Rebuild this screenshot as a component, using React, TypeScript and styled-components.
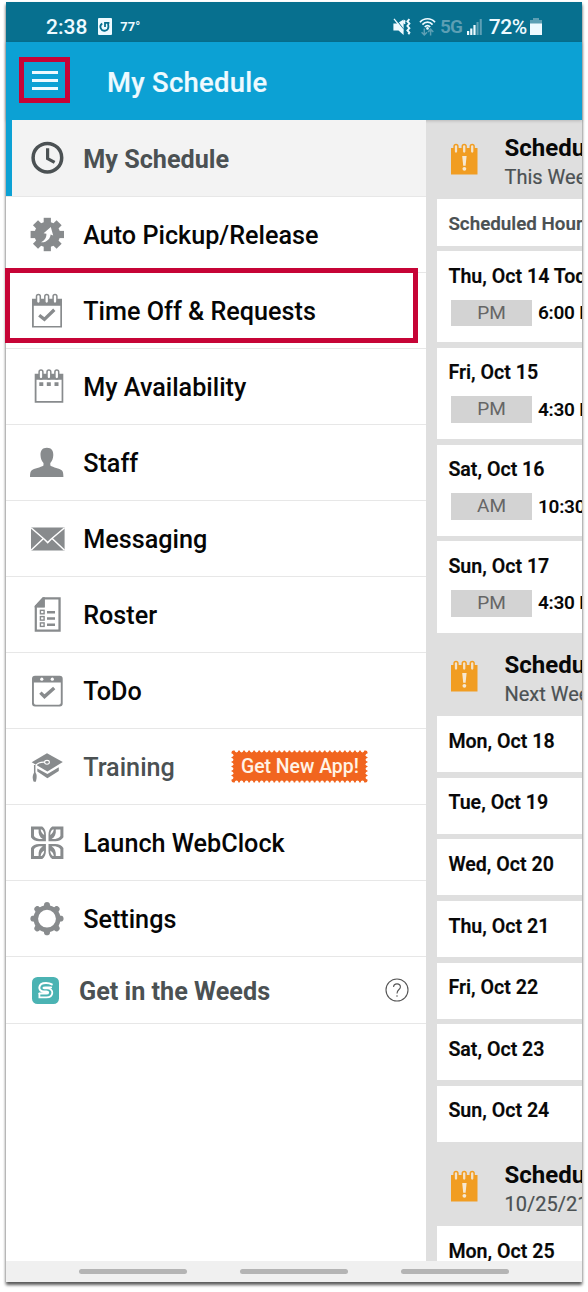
import React from "react";
import styled, { createGlobalStyle } from "styled-components";

const GlobalStyle = createGlobalStyle`
  * { box-sizing: border-box; }
  body { margin: 0; background: #fff; font-family: Roboto, "Liberation Sans", sans-serif; }
`;

const GREY = "#888b8d";

const Page = styled.div`
  width: 588px;
  height: 1292px;
  padding: 2px 6px 10px;
  background: #fff;
  overflow: hidden;
`;

const Phone = styled.div`
  width: 576px;
  height: 1280px;
  display: flex;
  flex-direction: column;
  background: #fff;
  box-shadow: 0 3px 3px rgba(0, 0, 0, 0.55), 0 2px 3px rgba(0, 0, 0, 0.25);
`;

const StatusBar = styled.div`
  height: 40px;
  flex: none;
  display: flex;
  align-items: center;
  padding: 9px 40px 0 40px;
  background: #07708f;
  color: #eefaff;
`;

const StatusText = styled.span<{ $size: number; $weight?: number; $dim?: boolean; $ml?: number; $ls?: number }>`
  font-size: ${(p) => p.$size}px;
  font-weight: ${(p) => p.$weight ?? 500};
  line-height: 24px;
  margin-left: ${(p) => p.$ml ?? 0}px;
  letter-spacing: ${(p) => p.$ls ?? 0}px;
  color: ${(p) => (p.$dim ? "#5d9fb4" : "#eefaff")};
`;

const StatusIcon = styled.svg<{ $ml?: number }>`
  flex: none;
  display: block;
  margin-left: ${(p) => p.$ml ?? 0}px;
`;

const Spacer = styled.div`
  flex: 1;
`;

const AppBar = styled.header`
  height: 78px;
  flex: none;
  display: flex;
  align-items: flex-start;
  padding: 15px 0 0 13px;
  background: #0ca1d4;
  position: relative;
  box-shadow: 0 1px 3px rgba(0, 0, 0, 0.18);
`;

const MenuButton = styled.button`
  width: 51px;
  height: 46px;
  padding: 1px 0 0;
  display: flex;
  flex-direction: column;
  align-items: center;
  justify-content: center;
  gap: 5px;
  border: 5px solid #c60436;
  background: transparent;
`;

const MenuLine = styled.span`
  width: 26px;
  height: 3px;
  background: #eefaff;
`;

const Title = styled.h1`
  margin: 10px 0 0 37px;
  font-size: 27.4px;
  letter-spacing: 0.3px;
  line-height: 32px;
  font-weight: 500;
  color: #eefaff;
  -webkit-text-stroke: 0.2px #eefaff;
`;

const Body = styled.div`
  flex: 1;
  min-height: 0;
  display: flex;
`;

const Drawer = styled.nav`
  width: 420px;
  flex: none;
  background: #fff;
`;

const Row = styled.div<{ $active?: boolean; $short?: boolean }>`
  position: relative;
  display: flex;
  align-items: center;
  height: ${(p) => (p.$short ? 68 : 76)}px;
  border-left: ${(p) => (p.$active ? "6px solid #0ca1d4" : "none")};
  padding-left: ${(p) => (p.$active ? 15 : p.$short ? 26 : 21)}px;
  border-top: ${(p) => (p.$active ? "none" : "1px solid #e7e7e7")};
  border-bottom: ${(p) => (p.$short ? "1px solid #e7e7e7" : "none")};
  background: ${(p) => (p.$active ? "#f3f3f3" : "#fff")};
`;

const RowIcon = styled.svg`
  width: 40px;
  height: 40px;
  flex: none;
`;

const Label = styled.span<{ $muted?: boolean; $bold?: boolean; $ml?: number }>`
  margin-left: ${(p) => p.$ml ?? 16.2}px;
  padding-top: ${(p) => (p.$bold ? 4 : 2)}px;
  font-size: 25.2px;
  line-height: 30px;
  font-weight: ${(p) => (p.$bold ? 700 : 500)};
  white-space: nowrap;
  color: ${(p) => (p.$muted ? "#4b5153" : "#060606")};
`;

const Highlight = styled.div`
  position: absolute;
  left: -1px;
  top: -5px;
  width: 413px;
  height: 75px;
  border: 5px solid #c60436;
  z-index: 2;
`;

const Badge = styled.span`
  position: relative;
  width: 137px;
  height: 33px;
  margin: -1px 0 0 56.5px;
  display: flex;
  align-items: center;
  justify-content: center;
  font-size: 19.4px;
  font-weight: 500;
  color: #fff3e6;
  white-space: nowrap;
`;

const BadgeShape = styled.svg`
  position: absolute;
  inset: 0;
`;

const BadgeText = styled.span`
  position: relative;
`;

const HelpIcon = styled.svg`
  margin-left: auto;
  margin-right: 17px;
`;

const Schedule = styled.main`
  flex: 1;
  min-width: 0;
  overflow: hidden;
  padding-left: 11px;
  background: #dfdfdf;
`;

const WeekHeader = styled.div<{ $h: number }>`
  height: ${(p) => p.$h}px;
  display: flex;
  align-items: flex-end;
  padding: 0 0 7px 13px;
`;

const WeekIcon = styled.svg`
  flex: none;
  margin-bottom: 17px;
`;

const WeekText = styled.div`
  margin-left: 26.5px;
  white-space: nowrap;
`;

const WeekTitle = styled.div`
  font-size: 24px;
  line-height: 28px;
  font-weight: 700;
  color: #080808;
`;

const WeekSub = styled.div`
  font-size: 20px;
  line-height: 30px;
  color: #4b5153;
  -webkit-text-stroke: 0.2px #4b5153;
`;

const Card = styled.div<{ $h: number; $last?: boolean }>`
  height: ${(p) => p.$h}px;
  margin-bottom: ${(p) => (p.$last ? 0 : 5.5)}px;
  padding: 13.7px 0 0 11.4px;
  background: #fff;
  white-space: nowrap;
`;

const CardTitle = styled.div<{ $muted?: boolean }>`
  font-size: ${(p) => (p.$muted ? 18.8 : 19.6)}px;
  line-height: 24px;
  font-weight: 600;
  margin-top: ${(p) => (p.$muted ? -0.8 : 0)}px;
  color: ${(p) => (p.$muted ? "#4b5153" : "#080808")};
  -webkit-text-stroke: 0.15px currentColor;
`;

const Shift = styled.div`
  display: flex;
  align-items: center;
  margin: 11px 0 0 2.6px;
`;

const Period = styled.span`
  flex: none;
  width: 81px;
  height: 26.5px;
  line-height: 26.5px;
  text-align: center;
  font-size: 19px;
  background: #d3d3d3;
  color: #666;
`;

const Time = styled.span`
  margin-left: 6px;
  font-size: 19px;
  letter-spacing: -0.25px;
  line-height: 26px;
  font-weight: 600;
  color: #080808;
`;

const NavBar = styled.footer`
  height: 21px;
  flex: none;
  display: flex;
  align-items: center;
  gap: 53px;
  padding-left: 73px;
  background: #f0f0f0;
`;

const Pill = styled.span`
  width: 108px;
  height: 5px;
  border-radius: 3px;
  background: #b4b4b4;
`;

const angles = [0, 45, 90, 135, 180, 225, 270, 315];

const rings = (xs: number[], top: number, stroke: string, inner: string) =>
  xs.map((x) => <rect key={x} x={x - 1.9} y={top} width="3.8" height="9" rx="1.9" fill={inner} stroke={stroke} strokeWidth="1.5" />);

const icons: Record<string, React.ReactNode> = {
  clock: (
    <g fill="none" stroke="#4b5153">
      <circle cx="20.4" cy="19.7" r="14.3" strokeWidth="3.5" />
      <path d="M20.6 10.3V20.6L27.6 24.4" strokeWidth="3.2" />
    </g>
  ),
  auto: (
    <g fill={GREY}>
      <circle cx="20.3" cy="19.5" r="12.8" />
      {angles.map((a) => (
        <rect key={a} x="16.7" y="2.8" width="7.2" height="8" transform={`rotate(${a} 20.3 19.5)`} />
      ))}
      <path d="M14 27.2C17.6 25.6 19.6 22.6 19.4 18.8L16.6 18.2L23.8 12L26.2 20.4L23.6 19.4C23.4 23.4 19.8 27.6 14 27.2Z" fill="#fff" />
    </g>
  ),
  timeoff: (
    <g>
      <path fillRule="evenodd" d="M5 7.8H35V36.6H5ZM6.8 14.8V34.9H33.3V14.8Z" fill={GREY} />
      {rings([11.4, 19.7, 28], 3.4, GREY, "#fff")}
      <path d="M12.2 24.2L17.4 28.4L27.3 18.8" fill="none" stroke={GREY} strokeWidth="3.3" />
    </g>
  ),
  availability: (
    <g fill={GREY}>
      <path fillRule="evenodd" d="M7.7 6.8H36.3V35.7H7.7ZM9.5 12.7V33.9H34.6V12.7Z" />
      {rings([14, 21.9, 29.8], 3, GREY, "#fff")}
      <path d="M12.3 15.3h4v3.7h-4zM19.8 15.3h4v3.7h-4zM27.5 15.3h4v3.7h-4z" />
    </g>
  ),
  staff: (
    <path
      fill={GREY}
      d="M19.9 4.7C24.4 4.7 26.4 7.5 26.3 12C26.2 15.6 25 18.2 23.3 20V22.4C26 24.4 32.5 25.3 35 27.4C36 28.4 36.4 30.5 36.4 34H3C3 30.5 3.4 28.4 4.5 27.4C7 25.3 13.8 24.4 16.5 22.4V20C14.8 18.2 13.6 15.6 13.5 12C13.4 7.5 15.4 4.7 19.9 4.7Z"
    />
  ),
  message: (
    <g>
      <path d="M4 8.4H37.6V31.4H4Z" fill={GREY} />
      <path d="M4 8.8L17.3 20.2L20.7 23.6L24 20.2L37.6 8.8M4 31.3L16.2 19.8M37.6 31.3L25.4 19.8" fill="none" stroke="#fff" strokeWidth="1.5" />
    </g>
  ),
  roster: (
    <g fill={GREY}>
      <path fillRule="evenodd" d="M15.8 2.2H33.7V36.7H7.7V11ZM17.6 4.4V12.2H9.9V34.5H31.4V4.4Z" />
      <path d="M15.8 2.2H17.8V12.4H7.7V11Z" />
      <path d="M20 16h8v2.4h-8zM20 22.3h8v2.4h-8zM20 28.5h8v2.4h-8z" />
      <g fill="none" stroke={GREY} strokeWidth="1.4">
        <rect x="13.4" y="15.3" width="3.7" height="3.5" />
        <rect x="13.4" y="21.6" width="3.7" height="3.5" />
        <rect x="13.4" y="27.9" width="3.7" height="3.5" />
      </g>
    </g>
  ),
  todo: (
    <g>
      <path
        fill={GREY}
        fillRule="evenodd"
        d="M8 4.8H32.7A3 3 0 0 1 35.7 7.8V32.6A3 3 0 0 1 32.7 35.6H8A3 3 0 0 1 5 32.6V7.8A3 3 0 0 1 8 4.8ZM6.9 11.6V31.8A2 2 0 0 0 8.9 33.8H31.8A2 2 0 0 0 33.8 31.8V11.6Z"
      />
      <circle cx="14.8" cy="8.2" r="1.6" fill="#fff" />
      <circle cx="25.3" cy="8.2" r="1.6" fill="#fff" />
      <path d="M13.4 21.6L17.5 25.6L27.2 17" fill="none" stroke={GREY} strokeWidth="3.4" />
    </g>
  ),
  training: (
    <g>
      <path d="M4.7 15.2L20 6.2L35.8 15L20.4 24.4Z" fill={GREY} />
      <path d="M10.3 21.4L20.4 27L31.8 20.2V24L20.4 31.2L10.3 24.6Z" fill={GREY} />
      <path d="M18 15.2C13.5 14.8 9.3 16.4 8.6 19.4" fill="none" stroke="#fff" strokeWidth="1.2" />
      <ellipse cx="20" cy="15.3" rx="2.4" ry="1.9" fill="none" stroke="#fff" strokeWidth="1.1" />
      <path d="M7.7 18V26" stroke={GREY} strokeWidth="1.5" />
      <path d="M7.7 25C10.2 26.4 10 30.6 8.8 34.8H6.8C5.2 32 5.2 27.4 7.7 25Z" fill={GREY} />
    </g>
  ),
  webclock: (
    <g fill={GREY}>
      {["1 1", "-1 1", "1 -1", "-1 -1"].map((s) => (
        <g key={s} transform={`translate(20.2 19.7) scale(${s})`}>
          <path
            fillRule="evenodd"
            d="M-16.2 -16.2H-5C-2.4 -14.4 -1.3 -11.6 -1.3 -8V-1.4H-8C-11.8 -1.6 -14.6 -2.8 -16.2 -5.4ZM-13.2 -13.2V-6.6C-12 -4.8 -10.4 -4 -8 -3.6H-4.4C-7.6 -5.6 -9 -8.6 -8.6 -13.2ZM-6.6 -13.2C-6.2 -10.6 -4.8 -8.8 -3 -7.8C-3.2 -10.6 -4 -12.2 -5.6 -13.2Z"
          />
        </g>
      ))}
    </g>
  ),
  settings: (
    <g>
      <circle cx="20" cy="19.7" r="11.2" fill="none" stroke={GREY} strokeWidth="4.6" />
      {angles.map((a) => (
        <path
          key={a}
          d="M15.8 8.6C17 7.3 17 6 17.1 5.2C17.4 2.4 22.6 2.4 22.9 5.2C23 6 23 7.3 24.2 8.6Z"
          fill={GREY}
          transform={`rotate(${a} 20 19.7)`}
        />
      ))}
    </g>
  ),
};

const notches: [number, number][] = [];
for (let i = 0; i < 26; i++) {
  const x = 3 + (i + 0.5) * (131 / 26);
  notches.push([x, 0.6], [x, 32.4]);
}
for (let i = 0; i < 6; i++) {
  const y = 3 + (i + 0.5) * 4.5;
  notches.push([0.6, y], [136.4, y]);
}

const menu = [
  { icon: "clock", label: "My Schedule", active: true },
  { icon: "auto", label: "Auto Pickup/Release" },
  { icon: "timeoff", label: "Time Off & Requests", highlight: true },
  { icon: "availability", label: "My Availability" },
  { icon: "staff", label: "Staff" },
  { icon: "message", label: "Messaging" },
  { icon: "roster", label: "Roster" },
  { icon: "todo", label: "ToDo" },
  { icon: "training", label: "Training", muted: true, badge: "Get New App!" },
  { icon: "webclock", label: "Launch WebClock" },
  { icon: "settings", label: "Settings" },
];

const shifts = [
  { day: "Thu, Oct 14 Today", period: "PM", time: "6:00 PM" },
  { day: "Fri, Oct 15", period: "PM", time: "4:30 PM" },
  { day: "Sat, Oct 16", period: "AM", time: "10:30 AM" },
  { day: "Sun, Oct 17", period: "PM", time: "4:30 PM" },
];

const nextWeek = ["Mon, Oct 18", "Tue, Oct 19", "Wed, Oct 20", "Thu, Oct 21", "Fri, Oct 22", "Sat, Oct 23", "Sun, Oct 24"];

function Week({ sub, height }: { sub: string; height: number }) {
  return (
    <WeekHeader $h={height}>
      <WeekIcon width="28" height="32" viewBox="0 0 28 32">
        <path d="M1 5H27.5V31.5H1Z" fill="#f19d22" />
        {rings([6, 14.2, 22.2], 1.4, "#f19d22", "#f3e3cb")}
        <path d="M12.2 13H16.6L15.6 22.8H13.2Z" fill="#f6e8d2" />
        <circle cx="14.4" cy="25.8" r="1.9" fill="#f6e8d2" />
      </WeekIcon>
      <WeekText>
        <WeekTitle>Schedule</WeekTitle>
        <WeekSub>{sub}</WeekSub>
      </WeekText>
    </WeekHeader>
  );
}

export default function App() {
  return (
    <Page>
      <GlobalStyle />
      <Phone>
        <StatusBar>
          <StatusText $size={21}>2:38</StatusText>
          <StatusIcon $ml={11} width="14" height="17" viewBox="0 0 14 17">
            <rect width="14" height="17" rx="1" fill="#eefaff" />
            <path d="M4.2 5.4A4 4 0 1 0 10.4 8.4L10 4.9M7 9V4.8H11.4" fill="none" stroke="#07708f" strokeWidth="1.8" />
          </StatusIcon>
          <StatusText $size={13} $weight={700} $ml={8}>77°</StatusText>
          <Spacer />
          <StatusIcon width="18" height="18" viewBox="0 0 18 18">
            <path d="M0.4 5.6H4L10.6 1.4V17L5.5 12.4H0.4Z" fill="#eefaff" />
            <path d="M2 0L12 13.5" stroke="#07708f" strokeWidth="1.2" />
            <path d="M1 0.8L10.5 12.5" stroke="#eefaff" strokeWidth="1.3" />
            <path d="M12 2.4l-1.2 1.8 1.2 1.6M16.4 1.2l-2 2.2 2 2.2-2 2.3 2 2.3-2 2.3 2 2.2-1 1.6" fill="none" stroke="#eefaff" strokeWidth="1.9" />
          </StatusIcon>
          <StatusIcon $ml={7.5} width="17" height="20" viewBox="0 0 17 20">
            <g fill="none" stroke="#eefaff" strokeWidth="1.7">
              <path d="M1 5.2C5 .6 12 .6 16 5.2M3.4 7.6C6.2 4.4 10.8 4.4 13.6 7.6M5.8 10C7.4 8.2 9.6 8.2 11.2 10" />
            </g>
            <circle cx="8.5" cy="11.4" r="1.3" fill="#eefaff" />
            <path d="M5.3 11.5v6.3M2.6 15.2l2.7 2.8 2.7-2.8M11.6 18.5v-6M9 15l2.6-2.8 2.7 2.8" fill="none" stroke="#5d9fb4" strokeWidth="1.5" />
          </StatusIcon>
          <StatusText $size={19} $weight={600} $dim $ml={4} $ls={-0.8}>5G</StatusText>
          <StatusIcon $ml={5} width="15" height="16" viewBox="0 0 15 16">
            <path d="M0 12h2.2v4H0zM3.2 9.5h2.2v6.5H3.2zM6.4 6h2.2v10H6.4z" fill="#eefaff" />
            <path d="M9.5 3h2.1v13H9.5zM12.7 0h2.1v16h-2.1z" fill="#5d9fb4" />
          </StatusIcon>
          <StatusText $size={21} $ml={6.5} $ls={-0.35}>72%</StatusText>
          <StatusIcon $ml={3} width="12" height="17" viewBox="0 0 12 17">
            <path d="M3 0h6v2h3v4H0V2h3z" fill="#5d9fb4" />
            <path d="M0 5.5h12V17H0z" fill="#eefaff" />
          </StatusIcon>
        </StatusBar>

        <AppBar>
          <MenuButton aria-label="Menu">
            <MenuLine />
            <MenuLine />
            <MenuLine />
          </MenuButton>
          <Title>My Schedule</Title>
        </AppBar>

        <Body>
          <Drawer>
            {menu.map((m) => (
              <Row key={m.label} $active={m.active}>
                <RowIcon viewBox="0 0 40 40">{icons[m.icon]}</RowIcon>
                <Label $muted={m.active || m.muted} $bold={m.active}>
                  {m.label}
                </Label>
                {m.badge && (
                  <Badge>
                    <BadgeShape width="137" height="33" viewBox="0 0 137 33">
                      <rect x="0.5" y="0.5" width="136" height="32" rx="2" fill="#f1651f" />
                      {notches.map(([x, y]) => (
                        <circle key={`${x}-${y}`} cx={x} cy={y} r="1.8" fill="#fff" />
                      ))}
                    </BadgeShape>
                    <BadgeText>{m.badge}</BadgeText>
                  </Badge>
                )}
                {m.highlight && <Highlight />}
              </Row>
            ))}
            <Row $short>
              <StatusIcon width="27" height="27" viewBox="0 0 27 27">
                <rect width="27" height="27" rx="5.5" fill="#4bb3b3" />
                <g fill="none" stroke="#fff" strokeLinecap="round">
                  <path d="M19.8 7.4C18.2 6.4 16.6 6 14 6C5.4 6 5.6 14.6 11.8 14.6H14.4C16.8 14.6 16.6 16.6 14.4 16.6H7.4" strokeWidth="2" />
                  <path d="M19.2 10.4H13.4C10.6 10.4 10.8 11.4 13 11.4H15.4C22.2 11.4 22 20.4 14.4 20.4H7.4V16.6" strokeWidth="1.8" />
                </g>
              </StatusIcon>
              <Label $muted $bold $ml={20}>
                Get in the Weeds
              </Label>
              <HelpIcon width="24" height="24" viewBox="0 0 24 24" fill="none" stroke="#555" strokeWidth="1.1">
                <circle cx="12" cy="12" r="11" />
                <path d="M8.6 9C8.6 4.8 15.4 4.8 15.4 9C15.4 11.6 12 11.6 12 15.4" />
                <path d="M12 17.2V18.8" />
              </HelpIcon>
            </Row>
          </Drawer>

          <Schedule>
            <Week sub="This Week" height={79} />
            <Card $h={46.5}>
              <CardTitle $muted>Scheduled Hours:</CardTitle>
            </Card>
            {shifts.map((s, i) => (
              <Card key={s.day} $h={91.3} $last={i === shifts.length - 1}>
                <CardTitle>{s.day}</CardTitle>
                <Shift>
                  <Period>{s.period}</Period>
                  <Time>{s.time}</Time>
                </Shift>
              </Card>
            ))}
            <Week sub="Next Week" height={83.5} />
            {nextWeek.map((d, i) => (
              <Card key={d} $h={56.1} $last={i === nextWeek.length - 1}>
                <CardTitle>{d}</CardTitle>
              </Card>
            ))}
            <Week sub="10/25/21" height={84} />
            <Card $h={56.1}>
              <CardTitle>Mon, Oct 25</CardTitle>
            </Card>
          </Schedule>
        </Body>

        <NavBar>
          <Pill />
          <Pill />
          <Pill />
        </NavBar>
      </Phone>
    </Page>
  );
}
